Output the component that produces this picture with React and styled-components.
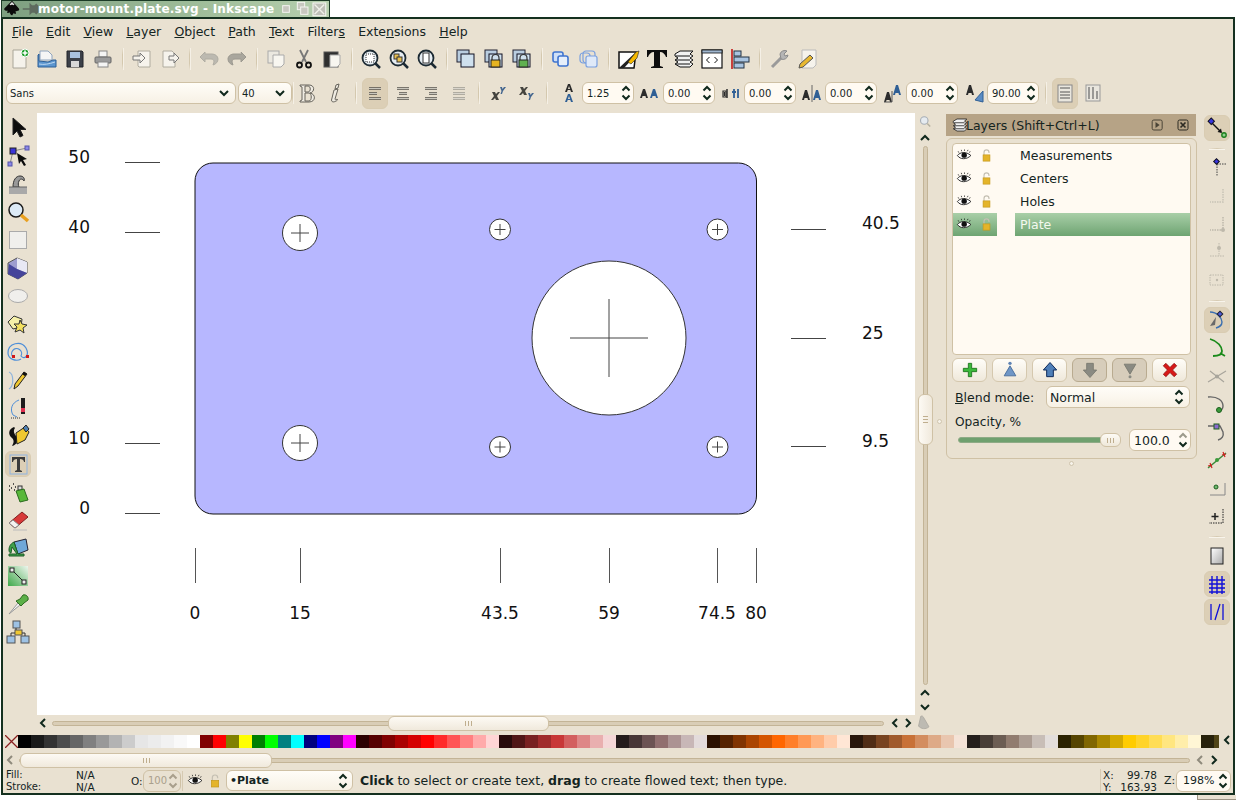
import React from "react";
import styled, { createGlobalStyle, css } from "styled-components";

const GlobalStyle = createGlobalStyle`
html,body{margin:0;padding:0;background:#fff;}
body{font-family:"DejaVu Sans","Liberation Sans",sans-serif;color:#14241f;}
`
const PANEL = "#e9e1d1";
const EDGE = "#cfc1a5";
const INK = "#10281c";

const Page = styled.div`
width:1236px;
height:800px;
display:flex;
flex-direction:column;
overflow:hidden;
position:relative;
background:#fff;
`
const TitleTab = styled.div`
width:329px;
height:17px;
margin-left:1px;
flex:none;
display:flex;
align-items:center;
box-sizing:border-box;
border:1px solid #1b3a26;
border-bottom:none;
background:linear-gradient(90deg,#7d9f80 0%,#9fbd9a 60%,#b6cfae 100%);
`
const TitleText = styled.span`
color:#fff;
font-size:12px;
font-weight:700;
letter-spacing:0.2px;
margin-left:-2px;
white-space:nowrap;
flex:1;
`
const TitleBtns = styled.div`
display:flex;
align-items:center;
flex:none;
margin-right:1px;
`
const Win = styled.div`
margin:0 1px;
height:778px;
flex:none;
box-sizing:border-box;
border:2px solid #14301f;
background:${PANEL};
display:flex;
flex-direction:column;
`
const MenuBar = styled.div`
height:24px;
flex:none;
display:flex;
align-items:center;
padding-left:2.400px;
font-size:12.5px;
`
const MenuItem = styled.span`
padding:0 6.600px;
`
const Mn = styled.span`
text-decoration:underline;
`
const CommandBar = styled.div`
height:32px;
flex:none;
display:flex;
align-items:center;
padding-left:2px;
`
const TextBar = styled.div`
height:36px;
margin-bottom:2px;
flex:none;
display:flex;
align-items:center;
padding-left:3px;
`
const Btn = styled.div`
width:28px;
height:28px;
flex:none;
display:flex;
align-items:center;
justify-content:center;
`
const Toggle = styled.div`
width:26px;
height:${p => p.$tall ? 31 : 26}px;
box-sizing:border-box;
display:flex;
align-items:center;
justify-content:center;
border:1px solid #d9ccb2;
border-radius:6px;
background:#dccfb6;
`
const Sep = styled.div`
width:${p => p.$w || 11}px;
height:22px;
flex:none;
display:flex;
justify-content:center;
&::before{
content:"";
width:1px;
height:100%;
background:linear-gradient(180deg,${PANEL},#d4c8ae 30%,#d4c8ae 70%,${PANEL});
box-shadow:1px 0 0 #f5f0e6;
}
`
const Glyph = styled.svg`
width:${p => p.$s || 24}px;
height:${p => p.$s || 24}px;
flex:none;
display:block;
overflow:visible;
`
const UpdownGlyph = styled.svg`
width:10px;
height:18px;
flex:none;
display:block;
`
const fieldBox = css`
box-sizing:border-box;
height:22px;
flex:none;
display:flex;
align-items:center;
border:1px solid ${EDGE};
border-radius:6px;
background:#fffaf2;
`
const ComboBox = styled.div`
${fieldBox}
width:${p => p.$w}px;
margin-left:${p => p.$ml || 0}px;
padding:0 6px 0 3px;
font-size:10px;
justify-content:space-between;
background:linear-gradient(180deg,#fffdf8,#f7f1e5);
`
const SpinBox = styled.div`
${fieldBox}
width:${p => p.$w || 52}px;
padding:0 2px 0 4px;
font-size:10px;
justify-content:space-between;
${p => p.$off && css`
background:${PANEL};
color:#a99f8c;
`}
`
const SpinLabel = styled.div`
width:29px;
flex:none;
display:flex;
padding-left:4px;
box-sizing:border-box;
`
const Body = styled.div`
height:622px;
flex:none;
display:flex;
`
const ToolBox = styled.div`
width:34px;
flex:none;
padding-top:1px;
display:flex;
flex-direction:column;
`
const ToolSlot = styled.div`
width:30px;
height:28px;
display:flex;
align-items:center;
justify-content:center;
`
const CanvasCol = styled.div`
width:900px;
flex:none;
display:flex;
flex-direction:column;
`
const CanvasRow = styled.div`
height:602px;
display:flex;
`
const Drawing = styled.svg`
width:878px;
height:602px;
display:block;
flex:none;
background:#fff;
`
const Measure = styled.text`
font-family:"DejaVu Sans",sans-serif;
font-size:17px;
fill:#111;
`
const VScroll = styled.div`
width:22px;
flex:none;
display:flex;
flex-direction:column;
align-items:center;
padding-right:2px;
box-sizing:border-box;
`
const VArrow = styled.div`
height:14px;
flex:none;
display:flex;
align-items:center;
`
const VTrough = styled.div`
width:5px;
height:539px;
margin:1px 0;
flex:none;
box-sizing:border-box;
position:relative;
border:1px solid #c3b496;
border-radius:3px;
background:#d9cdb6;
`
const VThumb = styled.div`
position:absolute;
left:-6px;
top:247px;
width:15px;
height:51px;
box-sizing:border-box;
border:1px solid ${EDGE};
border-radius:6px;
background:linear-gradient(90deg,#fdfaf4,#f0e9dc);
display:flex;
align-items:center;
justify-content:center;
`
const Grip = styled.div`
width:${p => p.$v ? 5 : 7}px;
height:${p => p.$v ? 7 : 5}px;
background:repeating-linear-gradient(${p => p.$v ? "180deg" : "90deg"},#bfae8e 0 1px,transparent 1px 3px);
`
const HScroll = styled.div`
height:20px;
flex:none;
padding-bottom:4px;
box-sizing:border-box;
display:flex;
align-items:center;
`
const HTrough = styled.div`
width:${p => p.$w}px;
height:5px;
flex:none;
margin:${p => p.$m || "0 5px 0 3px"};
box-sizing:border-box;
position:relative;
border:1px solid #c3b496;
border-radius:3px;
background:#d9cdb6;
`
const HThumb = styled.div`
position:absolute;
left:${p => p.$left}px;
top:-6px;
width:${p => p.$w}px;
height:15px;
box-sizing:border-box;
border:1px solid ${EDGE};
border-radius:6px;
background:linear-gradient(180deg,#fdfaf4,#f0e9dc);
display:flex;
align-items:center;
justify-content:center;
`
const ArrowSlot = styled.div`
width:12px;
flex:none;
display:flex;
justify-content:center;
margin-left:${p => p.$ml || 0}px;
`
const Dock = styled.div`
width:263px;
flex:none;
padding:1px 3px 0 9px;
box-sizing:border-box;
display:flex;
flex-direction:column;
position:relative;
`
const DockTitle = styled.div`
height:22px;
flex:none;
width:250px;
display:flex;
align-items:center;
background:#b6a386;
font-size:12.5px;
padding-left:5px;
box-sizing:border-box;
`
const DockName = styled.span`
flex:1;
margin-left:-3px;
`
const DockFrame = styled.div`
margin-top:2px;
width:251px;
height:321px;
flex:none;
box-sizing:border-box;
border:1px solid ${EDGE};
border-radius:6px;
padding:4px 4px 0 5px;
`
const LayerTree = styled.div`
width:239px;
height:212px;
box-sizing:border-box;
border:1px solid ${EDGE};
border-radius:4px;
background:#fffaf2;
`
const LayerRow = styled.div`
height:23px;
display:flex;
align-items:center;
font-size:12.5px;
`
const LayerCell = styled.div`
height:100%;
display:flex;
align-items:center;
box-sizing:border-box;
${p => p.$sel && css`
background:linear-gradient(180deg,#a9cfa8,#6ea472);
color:#f4f8ee;
`}
`
const EyeCell = styled(LayerCell)`
width:44px;
flex:none;
margin-right:18px;
`
const NameCell = styled(LayerCell)`
width:175px;
padding-left:5px;
`
const IconSlot = styled.div`
width:${p => p.$w || 22}px;
flex:none;
display:flex;
justify-content:center;
`
const ActionRow = styled.div`
margin-top:3px;
display:flex;
gap:5px;
`
const ActionBtn = styled.div`
width:35px;
height:24px;
box-sizing:border-box;
display:flex;
align-items:center;
justify-content:center;
border:1px solid ${p => p.$off ? "#b9ab90" : "#d5c8ae"};
border-radius:6px;
background:${p => p.$off ? "#d7cdbb" : "linear-gradient(180deg,#fffdf8,#efe8da)"};
`
const BlendRow = styled.div`
margin-top:4px;
display:flex;
align-items:center;
font-size:12.5px;
padding-left:3px;
`
const BlendLabel = styled.div`
width:91px;
flex:none;
`
const BlendSelect = styled(ComboBox)`
width:144px;
font-size:12.5px;
padding-right:5px;
`
const OpacityLabel = styled.div`
margin-top:6px;
height:16px;
line-height:16px;
font-size:12.2px;
padding-left:3px;
`
const SliderRow = styled.div`
margin-top:-1px;
display:flex;
align-items:center;
`
const SliderTrack = styled.div`
width:162px;
height:6px;
margin:0 9px 0 6px;
flex:none;
position:relative;
box-sizing:border-box;
border:1px solid #8eab86;
border-radius:3px;
background:#6fa06f;
`
const SliderThumb = styled.div`
position:absolute;
right:-2px;
top:-5px;
width:21px;
height:14px;
box-sizing:border-box;
border:1px solid ${EDGE};
border-radius:6px;
background:linear-gradient(180deg,#fdfaf4,#efe8da);
display:flex;
align-items:center;
justify-content:center;
`
const OpacitySpin = styled(SpinBox)`
font-size:12.5px;
width:62px;
`
const SashDot = styled.div`
width:5px;
height:5px;
margin:2px auto 0;
border-radius:50%;
box-sizing:border-box;
border:1px solid #cfc4ad;
background:#f6f2e9;
`
const SideSash = styled(SashDot)`
position:absolute;
left:0;
top:306px;
margin:0;
`
const SnapBar = styled.div`
width:33px;
flex:none;
padding:1px 0 0 3px;
box-sizing:border-box;
display:flex;
flex-direction:column;
`
const SnapSep = styled.div`
width:28px;
height:12px;
flex:none;
display:flex;
align-items:center;
justify-content:center;
&::before{
content:"";
width:16px;
height:1px;
background:linear-gradient(90deg,${PANEL},#d6cab2,${PANEL});
box-shadow:0 1px 0 #f8f4eb;
}
`
const PaletteRow = styled.div`
height:13px;
flex:none;
display:flex;
padding-left:2px;
`
const PaletteStrip = styled.div`
width:1214px;
flex:none;
display:flex;
overflow:hidden;
`
const Swatch = styled.div`
width:13px;
height:13px;
flex:none;
background:${p => p.$c};
`
const PaletteScroll = styled.div`
height:20px;
flex:none;
display:flex;
align-items:center;
padding:4px 0 0 1px;
box-sizing:border-box;
`
const StatusBar = styled.div`
height:25px;
flex:none;
display:flex;
align-items:center;
padding-left:3px;
font-size:10px;
`
const StyleGrid = styled.div`
width:120px;
flex:none;
display:grid;
grid-template-columns:70px 50px;
grid-auto-rows:12px;
align-items:center;
`
const NA = styled.span`
font-size:10.5px;
`
const OpacityTag = styled.span`
width:12px;
margin-left:5px;
flex:none;
font-size:10.5px;
`
const StatusSep = styled.div`
width:1px;
height:20px;
margin:0 2px 0 1px;
flex:none;
background:#d6cab2;
`
const LayerSelect = styled(ComboBox)`
width:127px;
height:21px;
margin-left:1px;
font-size:11px;
font-weight:700;
padding-right:4px;
`
const Message = styled.div`
flex:1;
margin-left:7px;
font-size:12.5px;
white-space:nowrap;
`
const CoordGrid = styled.div`
width:64px;
height:24px;
flex:none;
box-sizing:border-box;
padding:0 7px 0 2px;
border-left:1px solid #d6cab2;
display:grid;
grid-template-columns:auto 1fr;
grid-auto-rows:12px;
align-items:center;
font-size:10.5px;
`
const CoordValue = styled.span`
text-align:right;
`
const ZoomTag = styled.span`
width:12px;
font-size:11px;
flex:none;
`
const ZoomSpin = styled(SpinBox)`
width:55px;
margin-right:2px;
font-size:11px;
padding-left:6px;
`
const CornerGrip = styled.div`
position:absolute;
right:0;
bottom:0;
width:39px;
height:5px;
box-sizing:border-box;
background:${PANEL};
border-left:1px solid #9c9484;
border-bottom:1px solid #9c9484;
`

const Updown = ({ top = INK, bottom = INK }) => (
  <UpdownGlyph viewBox="0 0 10 18">
    <path d="M1.5 6.5 5 3l3.500 3.500" fill="none" stroke={top} strokeWidth="2" />
    <path d="M1.500 11.500 5 15l3.500-3.500" fill="none" stroke={bottom} strokeWidth="2" />
  </UpdownGlyph>
)
const Chevron = ({ dir = "down", color = INK }) => {
  const d = { down: "M1 3l4 4 4-4", up: "M1 7l4-4 4 4", left: "M7 1L3 5l4 4", right: "M3 1l4 4-4 4" }[dir]
  return <Glyph viewBox="0 0 10 10" $s={10}><path d={d} fill="none" stroke={color} strokeWidth="2" /></Glyph>
}

const page = "M6 3h9l4 4v14H6z"
const lens = (inner) => <>
  <circle cx="11" cy="11" r="7.500" fill="#e6edf2" stroke="#1c2a33" strokeWidth="1.800" />
  {inner}
  <path d="M16.500 16.500 21 21" stroke="#1c2a33" strokeWidth="2.500" />
</>
const stack = (inner) => <>
  <rect x="3" y="3" width="12" height="12" fill="#b9cde0" stroke="#223" />
  <rect x="7" y="7" width="13" height="13" fill="#cfe0ee" stroke="#112" />
  {inner}
</>
const padlock = (c) => <>
  <path d="M10 14v-3a3.500 3.500 0 0 1 7 0v3" fill="none" stroke="#333" strokeWidth="1.200" />
  <rect x="9" y="13" width="9" height="7" fill={c} stroke="#222" />
</>

const icons = {
  logo: <>
    <path d="M12 2 3 11c-1 1 0 3 2 3h2l-1 2c0 1 2 1 3 0l1 2c1 2 3 2 3 0l1-1 2 1c1 0 1-2 0-3l3-1c2 0 2-2 1-3z" fill="#0c0c0c" />
    <path d="M12 3.500 9 6.500l1.500 1 1.500-1 1.500 1 1.500-1z" fill="#e8e8e8" />
  </>,
  pin: <path d="M1 12h10M11 6v12l2-2h4l2 2 2-2V8l-2-2-2 2h-4z" fill="#5e6b5f" stroke="#5e6b5f" strokeWidth="2" />,
  new: <>
    <path d={page} fill="#f5f2eb" stroke="#a9a598" />
    <circle cx="18" cy="6" r="4" fill="#20a030" stroke="#fff" />
    <path d="M18 3.500v5M15.500 6h5" stroke="#fff" strokeWidth="1.500" />
  </>,
  open: <>
    <path d="M5 4h8l4 4v5H5z" fill="#f5f5f5" stroke="#8fa4bd" />
    <path d="M3 20V8l1-1v7l9 1 5-2h3v7z" fill="#5b95cf" stroke="#2d5f96" />
    <path d="M4 17c5 1 10 0 16-2" stroke="#bcd7ef" fill="none" />
  </>,
  save: <>
    <path d="M4 4h15l1 1v15H4z" fill="#3c4049" stroke="#22252b" />
    <rect x="7" y="5" width="10" height="6" fill="#a9c2e0" />
    <rect x="8" y="14" width="8" height="6" fill="#d8d8d8" />
  </>,
  print: <>
    <rect x="8" y="4" width="8" height="6" fill="#f4f4f4" stroke="#888" />
    <rect x="4" y="10" width="16" height="6" rx="1" fill="#9a9a9a" stroke="#666" />
    <rect x="7" y="15" width="10" height="5" fill="#f4f4f4" stroke="#888" />
  </>,
  import: <>
    <path d="M8 4h12v16H9l-1-1z" fill="#f6f3ec" stroke="#b0ac9f" />
    <path d="M3 9h7V6l5 5-5 5v-3H3z" fill="#f6f3ec" stroke="#777" />
  </>,
  export: <>
    <path d="M5 4h9l3 3v13H5z" fill="#f6f3ec" stroke="#b0ac9f" />
    <path d="M11 9h5V6l5 5-5 5v-3h-5z" fill="#f6f3ec" stroke="#777" />
  </>,
  undo: <path d="M8 5 3 10l5 5v-3h6c2 0 3 1 3 3l-1 3c3-1 5-3 5-6 0-3-3-5-6-5H8z" fill="#bcb9b0" stroke="#b0ada3" />,
  redo: <path d="M16 5l5 5-5 5v-3h-6c-2 0-3 1-3 3l1 3c-3-1-5-3-5-6 0-3 3-5 6-5h8z" fill="#a9a69d" stroke="#9c9990" />,
  copy: <>
    <rect x="4" y="4" width="11" height="12" fill="#ebe8e0" stroke="#aaa" />
    <path d="M9 8h11v9l-3 3H9z" fill="#f8f6f0" stroke="#aaa" />
  </>,
  cut: <>
    <path d="M8 3l6 12M16 3 10 15" stroke="#777" strokeWidth="1.800" />
    <circle cx="7.500" cy="18" r="2.500" fill="none" stroke="#111" strokeWidth="1.800" />
    <circle cx="16.500" cy="18" r="2.500" fill="none" stroke="#111" strokeWidth="1.800" />
  </>,
  paste: <>
    <rect x="4" y="5" width="14" height="15" fill="#2f2f2f" stroke="#555" />
    <path d="M10 8h10v9l-3 3h-7z" fill="#f8f6f0" stroke="#aaa" />
  </>,
  zoomSel: lens(<rect x="7" y="7" width="8" height="8" fill="#fff" stroke="#333" strokeDasharray="1 1" />),
  zoomDraw: lens(<><rect x="7" y="7" width="5" height="5" fill="#e8c050" stroke="#333" /><rect x="10" y="10" width="5" height="5" fill="#e8c050" stroke="#333" /></>),
  zoomPage: lens(<rect x="8" y="6" width="6" height="10" fill="#fff" stroke="#333" />),
  dup: stack(null),
  clone: stack(<>{padlock("#e6b422")}</>),
  unlink: stack(<>{padlock("#60b050")}</>),
  group: <>
    <rect x="4" y="5" width="10" height="10" rx="2" fill="#cfe0f7" stroke="#3f74d0" strokeWidth="1.600" />
    <rect x="9" y="9" width="10" height="10" rx="2" fill="#e6effb" stroke="#3f74d0" strokeWidth="1.600" />
  </>,
  ungroup: <>
    <rect x="3" y="6" width="10" height="10" rx="3" fill="none" stroke="#7aa0e0" strokeWidth="1.200" />
    <rect x="6" y="4" width="12" height="12" rx="3" fill="none" stroke="#7aa0e0" strokeWidth="1.200" />
    <rect x="9" y="9" width="11" height="11" rx="2" fill="#dfe9f8" stroke="#7aa0e0" strokeWidth="1.200" />
  </>,
  fill: <>
    <path d="M3 5h17L18 21H3z" fill="#fff" stroke="#111" strokeWidth="1.500" />
    <path d="M3 21 20 5v3L8 21z" fill="#222" />
    <path d="M12 15l8-10 3-1-2 7-6 6z" fill="#f5b800" stroke="#222" strokeWidth=".6" />
  </>,
  bigT: <path d="M3 3h20v7h-1c-1-3-3-5-6-5v14l3 1v1H7v-1l3-1V5c-3 0-5 2-6 5H3z" fill="#0d0d0d" />,
  layers: <>
    <path d="M3 7 8 4h13l-3 3 3 2-3 2 3 2-3 2 3 2-3 3H8l-5-3 3-2-3-2 3-2-3-2z" fill="#f2f2f2" stroke="#111" />
    <path d="M4 9h14M4 13h14M4 17h14" stroke="#111" />
  </>,
  xml: <>
    <rect x="2" y="3" width="20" height="18" fill="#fff" stroke="#111" strokeWidth="1.200" />
    <rect x="2" y="3" width="20" height="3" fill="#9fb6cf" stroke="#111" strokeWidth=".8" />
    <path d="M9.500 10 6.500 13l3 3M14.500 10l3 3-3 3" fill="none" stroke="#111" />
  </>,
  align: <>
    <path d="M4 2v20" stroke="#c01818" strokeWidth="1.600" />
    <rect x="6" y="4" width="7" height="5" fill="#a9c4e0" stroke="#234" />
    <rect x="6" y="10" width="15" height="5" fill="#a9c4e0" stroke="#234" />
    <rect x="6" y="16" width="10" height="5" fill="#a9c4e0" stroke="#234" />
  </>,
  prefs: <>
    <path d="M5 20 14 11" stroke="#9a9a9a" strokeWidth="3" />
    <path d="M13 7a5 5 0 0 1 7-3l-3 3 1 2 3-1a5 5 0 0 1-7 4z" fill="#b5b5b5" stroke="#8a8a8a" />
  </>,
  docProps: <>
    <path d="M7 3h14v15l-3 3H7z" fill="#f6f3ec" stroke="#bbb" />
    <path d="M4 21l1-4L15 8l3 3L8 20z" fill="#e8b830" stroke="#555" />
  </>,
  bold: <path d="M5 4h9c6 0 6 7 1 8 6 1 6 9-1 9H5v-1l2-1V6L5 5zM10 5v6h3c3 0 3-6 0-6zM10 12v8h4c3 0 3-8 0-8z" fill="#efebe2" stroke="#66635b" strokeWidth="1" />,
  italic: <path d="M13 4l3-1-1 4-3 1zM11 9l4-1-3 10c0 1 1 1 2 0l.500 1c-2 2-6 3-6 0z" fill="#efebe2" stroke="#66635b" strokeWidth="1" />,
  alignL: <><path d="M6 7.500h12M6 12.500h8M6 17.500h12" stroke="#55534d" strokeWidth="2.400" /><path d="M6 7.500h12M6 12.500h8M6 17.500h12" stroke="#e8e4da" strokeWidth=".8" /></>,
  alignC: <><path d="M6 7.500h12M8 12.500h8M6 17.500h12" stroke="#55534d" strokeWidth="2.400" /><path d="M6 7.500h12M8 12.500h8M6 17.500h12" stroke="#e8e4da" strokeWidth=".8" /></>,
  alignR: <><path d="M6 7.500h12M10 12.500h8M6 17.500h12" stroke="#55534d" strokeWidth="2.400" /><path d="M6 7.500h12M10 12.500h8M6 17.500h12" stroke="#e8e4da" strokeWidth=".8" /></>,
  alignJ: <><path d="M6 7.500h12M6 12.500h12M6 17.500h12" stroke="#9d9a91" strokeWidth="2.400" /><path d="M6 7.500h12M6 12.500h12M6 17.500h12" stroke="#e8e4da" strokeWidth=".8" /></>,
  superX: <>
    <path d="M6 11h3l1 2 2-2h2l-3 4 2 4H10l-1-2-2 2H5l3-4z" fill="#45443f" />
    <path d="M14 6h2l.500 2 1.500-2h2l-3 4-1 3h-1.500l1-3z" fill="#44668f" />
  </>,
  subX: <>
    <path d="M6 6h3l1 2 2-2h2l-3 4 2 4H10l-1-2-2 2H5l3-4z" fill="#45443f" />
    <path d="M14 12h2l.500 2 1.500-2h2l-3 4-1 3h-1.500l1-3z" fill="#44668f" />
  </>,
  lineSp: <>
    <path d="M8 11l3-8h2l3 8h-2l-.700-2H10.700L10 11zM11 8h2l-1-3z" fill="#2c2c2c" />
    <path d="M8 21l3-8h2l3 8h-2l-.700-2H10.700L10 21zM11 18h2l-1-3z" fill="#2f5f95" />
  </>,
  letterSp: <>
    <path d="M2 17l3-9h2l3 9H8l-.500-2h-3L4 17z" fill="#2c2c2c" />
    <path d="M12 17l3-9h2l3 9h-2l-.500-2h-3L14 17z" fill="#2f5f95" />
  </>,
  wordSp: <>
    <path d="M4 10v6h3v-6zM5.500 11v4" stroke="#2c2c2c" strokeWidth="1.200" fill="none" />
    <path d="M8 8v9" stroke="#2c2c2c" strokeWidth="1.500" />
    <path d="M15 8v9M13 11h4M19 8v9" stroke="#2f5f95" strokeWidth="1.800" />
  </>,
  kern: <>
    <path d="M2 19l3-10h2l3 10H8l-.500-2h-3L4 19z" fill="#2c2c2c" />
    <path d="M12 4v17" stroke="#666" />
    <path d="M13 19l3-10h2l3 10h-2l-.500-2h-3L15 19z" fill="#2f5f95" />
  </>,
  vShift: <>
    <path d="M3 21l3-10h2l3 10H9l-.500-2h-3L5 21z" fill="#2c2c2c" />
    <path d="M3 21h8V10" stroke="#555" fill="none" />
    <path d="M12 14l3-10h2l3 10h-2l-.500-2h-3L14 14z" fill="#2f5f95" />
  </>,
  rotate: <>
    <path d="M4 14l3-10h2l3 10h-2l-.500-2h-3L6 14z" fill="#2c2c2c" />
    <path d="M13 19 21 10v11z" fill="#5b8cc4" stroke="#2f5f95" />
  </>,
  horiz: <>
    <rect x="5" y="4" width="14" height="17" fill="#e9e6de" stroke="#888" />
    <path d="M7 7h10M7 11h10M7 14h10M7 17h10" stroke="#555" />
  </>,
  vert: <>
    <rect x="5" y="4" width="14" height="16" fill="#e9e6de" stroke="#999" />
    <path d="M8 6v12M12 6v12M16 10v8" stroke="#666" strokeWidth="1.200" />
  </>,
  select: <path d="M7 2v17l4-4 3 6 3-1.500-3-6h6z" fill="#0c0c0c" stroke="#222" />,
  node: <>
    <path d="M4 20 7 7l14-3" fill="none" stroke="#888" />
    <rect x="4" y="4" width="6" height="6" fill="#3b35d8" stroke="#222" />
    <rect x="19" y="2" width="4" height="4" fill="#8c88e8" stroke="#55a" />
    <rect x="2" y="18" width="4" height="4" fill="#8c88e8" stroke="#55a" />
    <path d="M11 9l10 6-4 1 3 5-2 1-3-5-2 3z" fill="#0c0c0c" />
  </>,
  tweak: <>
    <path d="M7 15c0-7 3-11 7-11 3 0 5 2 4 5-1-2-4-3-5 0-1 2-1 4 0 6z" fill="#999" stroke="#333" />
    <path d="M3 15h18v7H3z" fill="#a9a9a9" />
    <path d="M3 15h18" stroke="#666" />
  </>,
  zoom: <>
    <circle cx="10" cy="10" r="7" fill="#dceaf6" stroke="#1a1a1a" strokeWidth="1.500" />
    <path d="M15 15l7 6" stroke="#e8a020" strokeWidth="3.500" />
  </>,
  rect: <rect x="3.500" y="3.500" width="17" height="17" fill="#f0efec" stroke="#aaa" />,
  box3d: <>
    <path d="M11 2l10 4v11l-9 6-10-5V7z" fill="#9e9dcf" stroke="#555" />
    <path d="M11 2l10 4v11l-10-4z" fill="#e8e8f4" />
    <path d="M3 8l8 5 10 4-9 6-10-5z" fill="#45449a" />
  </>,
  ellipse: <ellipse cx="12" cy="12" rx="9.500" ry="6.500" fill="#f0efec" stroke="#aaa" />,
  star: <>
    <path d="M8 4 16 7l-1 8-8 2-5-7z" fill="#f5f0a8" stroke="#333" />
    <path d="M14 8l2 4 5 1-4 3 1 5-4-3-5 2 2-5-3-3h5z" fill="#f3e060" stroke="#333" />
  </>,
  spiral: <>
    <path d="M7 17a5 5 0 1 1 8-1c3 4 9 0 5-8C15 0 2 3 2 13c0 6 8 9 13 6" fill="none" stroke="#4f8fd8" strokeWidth="1.200" />
    <rect x="6" y="15" width="3" height="3" fill="#d01818" />
    <rect x="20" y="15" width="3" height="3" fill="#d01818" />
  </>,
  pencil: <>
    <path d="M3 4c5 2 5 14 0 17" fill="none" stroke="#8fb4dc" strokeWidth="1.200" />
    <path d="M8 21l1-5 9-12 3 2-9 12z" fill="#f0c830" stroke="#222" />
    <path d="M17 5l3 2" stroke="#111" strokeWidth="3" />
  </>,
  penTool: <>
    <path d="M13 4c-8 3-9 10-6 15l4 2" fill="none" stroke="#4f8fd8" />
    <path d="M5 22h10" stroke="#333" strokeDasharray="1 1" />
    <rect x="15" y="2" width="4" height="16" fill="#1c1c1c" />
    <rect x="15" y="12" width="4" height="4" fill="#e03050" />
  </>,
  calligraphy: <>
    <path d="M8 3C2 5 2 11 6 14c3 3 1 6 0 8 5-1 7-6 4-10C8 9 7 7 9 4z" fill="#111" />
    <path d="M11 20 10 9l9-6 4 5-4 8z" fill="#f0c830" stroke="#222" />
    <path d="M17 4l3-3 3 4-3 3z" fill="#4f7fb0" stroke="#222" />
  </>,
  text: <>
    <rect x="4" y="3" width="17" height="19" fill="none" stroke="#8fb4e0" />
    <path d="M6 5h13v5h-1c0-2-2-3-4-3v11l2 1v1H9v-1l2-1V7c-2 0-4 1-4 3H6z" fill="#3a3a3a" />
  </>,
  spray: <>
    <path d="M3 6h1M7 4h1M5 8h1M9 7h1M3 10h1M8 10h1" stroke="#222" strokeWidth="1.500" />
    <rect x="12" y="6" width="4" height="4" fill="#ddd" stroke="#333" />
    <path d="M10 11l8-2 4 11-8 2z" fill="#58b83a" stroke="#2b6b1f" />
  </>,
  eraser: <>
    <path d="M3 15 16 4l6 5L9 20z" fill="#d83a3a" stroke="#802020" />
    <path d="M3 15l6 5 4-3-6-5z" fill="#f4f2f0" stroke="#888" />
    <path d="M7 22h14" stroke="#bbb" />
  </>,
  bucket: <>
    <path d="M8 6l12-3 2 11-10 4z" fill="#6fa8d8" stroke="#223" />
    <path d="M8 6c-4 2-5 5-5 8 0 2 1 3 2 3l1-6 5 7H3v2h15v-2h-6z" fill="#3fa04a" stroke="#1d5c28" />
  </>,
  gradient: <>
    <defs><linearGradient id="gt" x1="0" y1="1" x2="1" y2="0"><stop offset="0" stopColor="#3fa84a" /><stop offset="1" stopColor="#eef6ee" /></linearGradient></defs>
    <rect x="2" y="2" width="20" height="20" fill="url(#gt)" />
    <path d="M6 6l12 12" stroke="#222" />
    <rect x="4" y="4" width="4" height="4" fill="#eee" stroke="#222" />
    <rect x="16" y="16" width="4" height="4" fill="#eee" stroke="#222" />
  </>,
  dropper: <>
    <path d="M3 22l9-11 2 2z" fill="#f4f4f4" stroke="#999" />
    <path d="M10 9l5 5 3-3 4-3c1-3-2-6-5-5l-3 4z" fill="#5cb048" stroke="#2e6b22" />
  </>,
  connector: <>
    <rect x="7" y="1" width="7" height="7" fill="#9ec2e4" stroke="#555" />
    <rect x="9" y="10" width="7" height="5" fill="#f0c830" stroke="#555" />
    <rect x="1" y="16" width="8" height="7" fill="#9ec2e4" stroke="#555" />
    <rect x="15" y="16" width="8" height="7" fill="#9ec2e4" stroke="#555" />
    <path d="M5 16v-3h4M19 16v-3h-3M10 8v2" stroke="#333" fill="none" />
  </>,
  eye: <>
    <path d="M2 12c4-5 12-6 19 0-6 6-15 6-19 0z" fill="#fff" stroke="#111" strokeWidth="1.200" />
    <circle cx="11.500" cy="11.500" r="3.800" fill="#111" />
    <path d="M4 8 3 6M8 6 7.500 4M12 5.500V3.500M16 6l1-2M19 8l1-2" stroke="#111" />
  </>,
  lock: <>
    <path d="M8 12V7a4 4 0 0 1 8 0v1" fill="none" stroke="#c4bfb2" strokeWidth="1.800" />
    <rect x="6.500" y="11" width="11" height="10" fill="#e4b42a" stroke="#c2961a" />
  </>,
  plus: <path d="M10 4h4v6h6v4h-6v6h-4v-6H4v-4h6z" fill="#3cb83c" stroke="#187018" />,
  raiseTop: <>
    <circle cx="12" cy="4" r="2" fill="#5d82b4" />
    <path d="M12 7l7 12H5z" fill="#6f96c6" stroke="#3e6596" />
  </>,
  up: <path d="M12 3l8 9h-4v8H8v-8H4z" fill="#4f7fb8" stroke="#0f2a5a" strokeWidth="1.200" />,
  down: <path d="M8 4h8v8h4l-8 9-8-9h4z" fill="#8a8a82" stroke="#77776e" />,
  lowerBot: <>
    <path d="M5 5h14l-7 12z" fill="#8a8a82" stroke="#77776e" />
    <circle cx="12" cy="20" r="1.800" fill="#8a8a82" />
  </>,
  remove: <path d="M7 4l5 5 5-5 3 3-5 5 5 5-3 3-5-5-5 5-3-3 5-5-5-5z" fill="#d81818" stroke="#901010" />,
  cone: <path d="M9 3c2-1 3 0 4 2l7 12c-4 4-11 3-14-1z" fill="#bdbab2" stroke="#aaa69e" />,
  zoomSm: <>
    <circle cx="11" cy="10" r="5" fill="#e6ebf0" stroke="#a6adb5" strokeWidth="1.500" />
    <path d="M15 14l4 4" stroke="#b5b0a0" strokeWidth="2" />
  </>,
  snapToggle: <>
    <path d="M7 7l9 9" stroke="#111" strokeWidth="1.400" />
    <path d="M17 17l-4.500-1 3.500-3.500z" fill="#111" />
    <rect x="4" y="3" width="4.500" height="4.500" transform="rotate(45 6.250 5.250)" fill="#3535e0" stroke="#112" />
    <circle cx="19" cy="19" r="2.200" fill="#8fd08f" stroke="#1d7f1d" strokeWidth="1.400" />
  </>,
  snapBox: <>
    <path d="M12 8h9M12 8v12" stroke="#444" strokeDasharray="1.500 1" />
    <rect x="9.500" y="3.500" width="4" height="4" transform="rotate(45 11.500 5.500)" fill="#3a35e0" stroke="#112" />
  </>,
  cornerOff: <path d="M18 5v13H5" fill="none" stroke="#c8c3b6" strokeWidth="1.500" strokeDasharray="1.500 1" />,
  cornerOff2: <><path d="M18 5v13H5" fill="none" stroke="#bdb8ab" strokeWidth="1.500" strokeDasharray="1.500 1" /><circle cx="18" cy="18" r="2" fill="#bdb8ab" /></>,
  midOff: <><path d="M14 3v13M5 16h14" stroke="#bdb8ab" strokeDasharray="1.500 1" /><circle cx="14" cy="8" r="2" fill="#bdb8ab" /></>,
  boxOff: <><rect x="5" y="7" width="13" height="10" fill="none" stroke="#bdb8ab" strokeDasharray="1.500 1" /><circle cx="12" cy="12" r="1.200" fill="#bdb8ab" /></>,
  snapNodes: <>
    <path d="M5 4c7 0 12 6 12 10s-3 5-6 6" fill="none" stroke="#3b6fb0" strokeWidth="1.400" />
    <rect x="13" y="4" width="4" height="4" transform="rotate(45 15 6)" fill="#4a5ad8" stroke="#223" />
    <path d="M5 18 11 9l-1 8z" fill="#6a6a6a" />
  </>,
  snapPath: <path d="M5 3c8 2 12 8 12 12 0 3-2 5-9 5M15 17l5 3" fill="none" stroke="#1a8a1a" strokeWidth="1.800" />,
  snapCross: <>
    <path d="M3 18 21 7M5 7l14 11" stroke="#a8a59c" strokeWidth="1.200" />
    <circle cx="12" cy="12.500" r="2" fill="#a8a59c" />
  </>,
  snapSmooth: <>
    <path d="M3 5c10-1 15 4 15 9 0 3-2 5-5 6" fill="none" stroke="#666" strokeWidth="1.400" />
    <circle cx="14" cy="18" r="2.500" fill="#3a9a3a" stroke="#1d5f1d" />
  </>,
  snapMid: <>
    <path d="M3 6h12l3 6c1 4-1 7-5 8" fill="none" stroke="#666" strokeWidth="1.400" />
    <rect x="9" y="4" width="5" height="5" fill="#8a6ad0" stroke="#1d5f1d" />
  </>,
  snapLine: <>
    <path d="M3 20 21 5" stroke="#3a8a3a" strokeWidth="1.400" />
    <path d="M5 15l2 5M18 4l2 5M3 18l4-1M17 7l4-1" stroke="#d02020" strokeWidth="1.200" />
    <circle cx="12" cy="12" r="2" fill="#3a9a3a" />
  </>,
  snapCenter: <>
    <path d="M5 19h15V7" fill="none" stroke="#888" />
    <circle cx="11" cy="11" r="2" fill="#6fb86f" stroke="#1d5f1d" />
  </>,
  snapOrigin: <>
    <path d="M10 9v7M6.500 12.500h7" stroke="#222" strokeWidth="1.500" />
    <path d="M18 5v14H4" fill="none" stroke="#222" strokeDasharray="1.500 1" />
  </>,
  snapPage: <>
    <defs><linearGradient id="pg" x1="0" y1="0" x2="1" y2="1"><stop offset="0" stopColor="#fff" /><stop offset="1" stopColor="#aaa" /></linearGradient></defs>
    <rect x="6" y="4" width="12" height="16" fill="url(#pg)" stroke="#222" />
  </>,
  grid: <path d="M4 8h16M4 12h16M4 16h16M4 20h16M7 4v18M12 4v18M17 4v18" stroke="#1010d8" strokeWidth="1.400" />,
  guide: <path d="M6 4v16M18 4v16M10 20l5-16" stroke="#1010d8" strokeWidth="1.300" />,
  winMin: <rect x="7" y="7" width="10" height="10" fill="#c8c8c0" stroke="#f4f4f0" strokeWidth="1.500" />,
  winMax: <>
    <rect x="5" y="2" width="11" height="11" fill="#c8c8c0" stroke="#f4f4f0" strokeWidth="1.500" />
    <rect x="10" y="9" width="11" height="11" fill="#c8c8c0" stroke="#f4f4f0" strokeWidth="1.500" />
  </>,
  winClose: <>
    <rect x="4" y="4" width="17" height="17" fill="#bfc0b8" stroke="#f4f4f0" strokeWidth="1.500" />
    <path d="M6 6l13 13M19 6 6 19" stroke="#f0f0ea" strokeWidth="1.800" />
  </>,
  dockPlay: <>
    <rect x="5" y="6" width="12" height="12" rx="2" fill="none" stroke="#4a4436" strokeWidth="1.200" />
    <path d="M9 8.500v7l5-3.500z" fill="#4a4436" />
  </>,
  dockClose: <>
    <rect x="6" y="6" width="12" height="12" rx="2" fill="none" stroke="#2c2a22" strokeWidth="1.200" />
    <path d="M9 9l6 6M15 9l-6 6" stroke="#2c2a22" strokeWidth="2" />
  </>,
  noPaint: <path d="M0 0 13 13M13 0 0 13" stroke="#8a2020" strokeWidth="1.300" />,
}

const Icon = ({ name, s = 24 }) => <Glyph viewBox="0 0 24 24" $s={s}>{icons[name]}</Glyph>

const MENU = [
  ["", "F", "ile"], ["", "E", "dit"], ["", "V", "iew"], ["", "L", "ayer"], ["", "O", "bject"], ["", "P", "ath"],
  ["", "T", "ext"], ["Filter", "s", ""], ["Exte", "n", "sions"], ["", "H", "elp"],
]
const COMMANDS = [
  "new", "open", "save", "print", 0, "import", "export", 0, "undo", "redo", 0, "copy", "cut", "paste", 0,
  "zoomSel", "zoomDraw", "zoomPage", 0, "dup", "clone", "unlink", 0, "group", "ungroup", 0,
  "fill", "bigT", "layers", "xml", "align", 0, "prefs", "docProps",
]
const SPINS = [
  ["letterSp", "0.00"], ["wordSp", "0.00"], ["kern", "0.00"], ["vShift", "0.00"], ["rotate", "90.00"],
]
const TOOLS = [
  "select", "node", "tweak", "zoom", "rect", "box3d", "ellipse", "star", "spiral", "pencil", "penTool",
  "calligraphy", "text", "spray", "eraser", "bucket", "gradient", "dropper", "connector",
]
const SNAPS = [
  ["snapToggle", 1], 0, ["snapBox"], ["cornerOff"], ["cornerOff2"], ["midOff"], ["boxOff"], 0,
  ["snapNodes", 1], ["snapPath"], ["snapCross"], ["snapSmooth"], ["snapMid"], ["snapLine"], ["snapCenter"], ["snapOrigin"], 0,
  ["snapPage"], ["grid", 1], ["guide", 1],
]
const LAYERS = ["Measurements", "Centers", "Holes", "Plate"]
const PALETTE = ("000000 1a1a1a 333333 4d4d4d 666666 808080 999999 b3b3b3 cccccc e6e6e6 ececec f2f2f2 f9f9f9 ffffff " +
  "800000 ff0000 808000 ffff00 008000 00ff00 008080 00ffff 000080 0000ff 800080 ff00ff " +
  "2b0000 550000 800000 aa0000 d40000 ff0000 ff2a2a ff5555 ff8080 ffaaaa ffd5d5 " +
  "280b0b 501616 782121 a02c2c c83737 d35f5f de8787 e9afaf f4d7d7 " +
  "241c1c 483737 6c5353 916f6f ac9393 c8b7b7 e3dbdb " +
  "2b1100 552200 803300 aa4400 d45500 ff6600 ff7f2a ff9955 ffb380 ffccaa ffe6d5 " +
  "28170b 502d16 784421 a05a2c c87137 d38d5f deaa87 e9c6af f4e3d7 " +
  "241f1c 483e37 6c5d53 917c6f ac9d93 c8beb7 e3dedb " +
  "2b2200 554400 806600 aa8800 d4aa00 ffcc00 ffd42a ffdd55 ffe680 ffeeaa fff6d5 " +
  "28220b 504416").split(" ")

const HOLES = [
  [300, 233, 17.5, 9], [500, 229.5, 10.5, 5.5], [717.5, 229.5, 10.5, 5.5], [609, 338, 77, 39],
  [300, 443, 17.5, 9], [500, 447, 10.5, 5.5], [717.5, 447, 10.5, 5.5],
]
const LEFT_MARKS = [["50", 162], ["40", 232], ["10", 443], ["0", 513]]
const RIGHT_MARKS = [["40.5", 229, 229], ["25", 338, 339], ["9.5", 446, 447]]
const BOTTOM_MARKS = [["0", 195], ["15", 300], ["43.5", 500], ["59", 609], ["74.5", 717], ["80", 756]]

const Plate = () => (
  <Drawing viewBox="37 113 878 602">
    <rect x="195" y="163" width="561.500" height="351" rx="18" fill="#b7b7ff" stroke="#111" />
    {HOLES.map(([x, y, r, c]) => (
      <g key={x + "-" + y}>
        <circle cx={x} cy={y} r={r} fill="#fff" stroke="#333" />
        <path d={`M${x - c} ${y}h${c * 2}M${x} ${y - c}v${c * 2}`} stroke="#444" />
      </g>
    ))}
    {LEFT_MARKS.map(([t, y]) => (
      <g key={t}>
        <path d={`M125 ${y + .5}h35`} stroke="#444" />
        <Measure x="90" y={y + 1} textAnchor="end">{t}</Measure>
      </g>
    ))}
    {RIGHT_MARKS.map(([t, y, base]) => (
      <g key={t}>
        <path d={`M791 ${y + .5}h35`} stroke="#444" />
        <Measure x="862" y={base}>{t}</Measure>
      </g>
    ))}
    {BOTTOM_MARKS.map(([t, x]) => (
      <g key={t}>
        <path d={`M${x + .5} 548v35`} stroke="#555" />
        <Measure x={x} y="619" textAnchor="middle">{t}</Measure>
      </g>
    ))}
  </Drawing>
)

export default function App() {
  return (
    <Page>
      <GlobalStyle />
      <TitleTab>
        <Icon name="logo" s={20} />
        <Icon name="pin" s={18} />
        <TitleText>motor-mount.plate.svg - Inkscape</TitleText>
        <TitleBtns>
          <Icon name="winMin" s={16} />
          <Icon name="winMax" s={16} />
          <Icon name="winClose" s={18} />
        </TitleBtns>
      </TitleTab>
      <Win>
        <MenuBar>
          {MENU.map(([a, m, b]) => <MenuItem key={a + m + b}>{a}<Mn>{m}</Mn>{b}</MenuItem>)}
        </MenuBar>
        <CommandBar>
          {COMMANDS.map((c, i) => c ? <Btn key={c}><Icon name={c} /></Btn> : <Sep key={i} />)}
        </CommandBar>
        <TextBar>
          <ComboBox $w={230}>Sans<Chevron /></ComboBox>
          <ComboBox $w={54} $ml={2} >40<Chevron /></ComboBox>
          <Sep $w={1} />
          <Btn><Icon name="bold" /></Btn>
          <Btn><Icon name="italic" /></Btn>
          <Sep $w={12} />
          <Btn><Toggle $tall><Icon name="alignL" /></Toggle></Btn>
          <Btn><Icon name="alignC" /></Btn>
          <Btn><Icon name="alignR" /></Btn>
          <Btn><Icon name="alignJ" /></Btn>
          <Sep />
          <Btn><Icon name="superX" /></Btn>
          <Btn><Icon name="subX" /></Btn>
          <Sep $w={13} />
          <SpinLabel><Icon name="lineSp" /></SpinLabel>
          <SpinBox>1.25<Updown /></SpinBox>
          {SPINS.map(([icon, v]) => (
            <React.Fragment key={icon}>
              <SpinLabel><Icon name={icon} /></SpinLabel>
              <SpinBox>{v}<Updown /></SpinBox>
            </React.Fragment>
          ))}
          <Sep $w={12} />
          <Btn><Toggle $tall><Icon name="horiz" /></Toggle></Btn>
          <Btn><Icon name="vert" /></Btn>
        </TextBar>
        <Body>
          <ToolBox>
            {TOOLS.map(t => (
              <ToolSlot key={t}>
                {t === "text" ? <Toggle><Icon name={t} /></Toggle> : <Icon name={t} />}
              </ToolSlot>
            ))}
          </ToolBox>
          <CanvasCol>
            <CanvasRow>
              <Plate />
              <VScroll>
                <Icon name="zoomSm" s={18} />
                <VArrow><Chevron dir="up" /></VArrow>
                <VTrough><VThumb><Grip $v /></VThumb></VTrough>
                <VArrow><Chevron dir="up" /></VArrow>
                <VArrow><Chevron /></VArrow>
              </VScroll>
            </CanvasRow>
            <HScroll>
              <ArrowSlot><Chevron dir="left" /></ArrowSlot>
              <HTrough $w={832}>
                <HThumb $left={335} $w={161}><Grip /></HThumb>
              </HTrough>
              <ArrowSlot><Chevron dir="left" /></ArrowSlot>
              <ArrowSlot $ml={1}><Chevron dir="right" /></ArrowSlot>
              <Icon name="cone" s={18} />
            </HScroll>
          </CanvasCol>
          <Dock>
            <SideSash />
            <DockTitle>
              <Icon name="layers" s={18} />
              <DockName>Layers (Shift+Ctrl+L)</DockName>
              <IconSlot $w={24}><Icon name="dockPlay" s={20} /></IconSlot>
              <IconSlot $w={26}><Icon name="dockClose" s={20} /></IconSlot>
            </DockTitle>
            <DockFrame>
              <LayerTree>
                {LAYERS.map(l => (
                  <LayerRow key={l}>
                    <EyeCell $sel={l === "Plate"}>
                      <IconSlot><Icon name="eye" s={17} /></IconSlot>
                      <IconSlot><Icon name="lock" s={15} /></IconSlot>
                    </EyeCell>
                    <NameCell $sel={l === "Plate"}>{l}</NameCell>
                  </LayerRow>
                ))}
              </LayerTree>
              <ActionRow>
                <ActionBtn><Icon name="plus" s={20} /></ActionBtn>
                <ActionBtn><Icon name="raiseTop" s={20} /></ActionBtn>
                <ActionBtn><Icon name="up" s={20} /></ActionBtn>
                <ActionBtn $off><Icon name="down" s={20} /></ActionBtn>
                <ActionBtn $off><Icon name="lowerBot" s={20} /></ActionBtn>
                <ActionBtn><Icon name="remove" s={20} /></ActionBtn>
              </ActionRow>
              <BlendRow>
                <BlendLabel><Mn>B</Mn>lend mode:</BlendLabel>
                <BlendSelect>Normal<Updown /></BlendSelect>
              </BlendRow>
              <OpacityLabel>Opacity, %</OpacityLabel>
              <SliderRow>
                <SliderTrack><SliderThumb><Grip /></SliderThumb></SliderTrack>
                <OpacitySpin>100.0<Updown top="#9c9a8c" /></OpacitySpin>
              </SliderRow>
            </DockFrame>
            <SashDot />
          </Dock>
          <SnapBar>
            {SNAPS.map((s, i) => !s ? <SnapSep key={i} /> : (
              <Btn key={s[0]}>
                {s[1] ? <Toggle><Icon name={s[0]} /></Toggle> : <Icon name={s[0]} />}
              </Btn>
            ))}
          </SnapBar>
        </Body>
        <PaletteRow>
          <PaletteStrip>
            <Glyph viewBox="0 0 13 13" $s={13}>{icons.noPaint}</Glyph>
            {PALETTE.map((c, i) => <Swatch key={i} $c={"#" + c} />)}
          </PaletteStrip>
          <ArrowSlot $ml={2}><Chevron dir="left" /></ArrowSlot>
        </PaletteRow>
        <PaletteScroll>
          <ArrowSlot><Chevron dir="left" color="#8f8a7c" /></ArrowSlot>
          <HTrough $w={1171} $m="0 4px 0 3px">
            <HThumb $left={0} $w={252}><Grip /></HThumb>
          </HTrough>
          <ArrowSlot><Chevron dir="left" color="#8f8a7c" /></ArrowSlot>
          <ArrowSlot $ml={2}><Chevron dir="right" /></ArrowSlot>
        </PaletteScroll>
        <StatusBar>
          <StyleGrid>
            <span>Fill:</span><NA>N/A</NA>
            <span>Stroke:</span><NA>N/A</NA>
          </StyleGrid>
          <OpacityTag>O:</OpacityTag>
          <SpinBox $w={38} $off>100<Updown top="#a99f8c" bottom="#a99f8c" /></SpinBox>
          <StatusSep />
          <IconSlot $w={20}><Icon name="eye" s={17} /></IconSlot>
          <IconSlot $w={20}><Icon name="lock" s={16} /></IconSlot>
          <LayerSelect>•Plate<Updown /></LayerSelect>
          <Message><b>Click</b> to select or create text, <b>drag</b> to create flowed text; then type.</Message>
          <CoordGrid>
            <span>X:</span><CoordValue>99.78</CoordValue>
            <span>Y:</span><CoordValue>163.93</CoordValue>
          </CoordGrid>
          <ZoomTag>Z:</ZoomTag>
          <ZoomSpin>198%<Updown /></ZoomSpin>
        </StatusBar>
      </Win>
      <CornerGrip />
    </Page>
  )
}
